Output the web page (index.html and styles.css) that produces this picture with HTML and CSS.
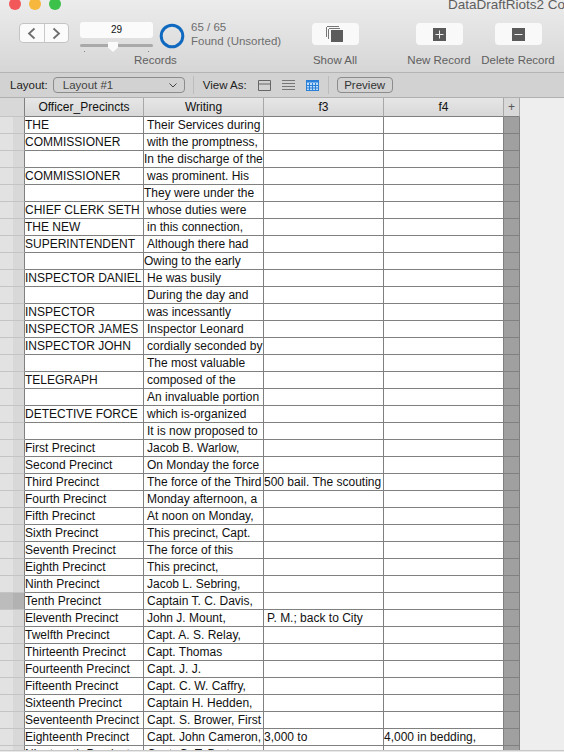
FILE: index.html
```html
<!DOCTYPE html>
<html lang="en">
<head>
<meta charset="utf-8">
<title>DataDraftRiots2 Copy</title>
<link rel="stylesheet" href="styles.css">
</head>
<body>
<header class="toolbar">
  <div class="titlebar">
    <span class="light red"></span><span class="light yellow"></span><span class="light green"></span>
    <span class="title">DataDraftRiots2 Copy</span>
  </div>
  <div class="tools">
    <div class="nav">
      <span class="nav-btn"><svg width="9" height="13" viewBox="0 0 9 13"><path d="M7.500 1.500 2 6.500l5.500 5" class="chev"/></svg></span>
      <span class="nav-btn"><svg width="9" height="13" viewBox="0 0 9 13"><path d="M1.500 1.500 7 6.500l-5.500 5" class="chev"/></svg></span>
    </div>
    <div class="records">
      <div class="records-top">
        <div class="stepper">
          <div class="rec-input">29</div>
          <div class="slider"><span class="thumb"></span></div>
          <div class="ticks"><span></span><span></span></div>
        </div>
        <svg class="ring" width="26" height="26" viewBox="0 0 26 26"><circle cx="13" cy="13" r="10.800" fill="none" stroke="#0f69c0" stroke-width="3"/></svg>
      </div>
      <div class="tool-label records-label">Records</div>
    </div>
    <div class="found"><div>65 / 65</div><div>Found (Unsorted)</div></div>
    <div class="tool tool-show">
      <span class="tool-btn"><svg width="18" height="16" viewBox="0 0 18 16"><path d="M1 .5h12M.5 1v10M3 2.500h11M2.500 3v10" fill="none" stroke="#777"/><rect x="5" y="4" width="12" height="12" fill="#5c5c5c"/></svg></span>
      <span class="tool-label">Show All</span>
    </div>
    <div class="tool tool-new">
      <span class="tool-btn"><svg width="13" height="13" viewBox="0 0 13 13"><rect width="13" height="13" fill="#5a5a5a"/><path d="M6.500 2.500v8M2.500 6.500h8" stroke="#eee" fill="none"/></svg></span>
      <span class="tool-label">New Record</span>
    </div>
    <div class="tool tool-del">
      <span class="tool-btn"><svg width="13" height="13" viewBox="0 0 13 13"><rect width="13" height="13" fill="#5a5a5a"/><path d="M2.500 6.500h8" stroke="#eee" fill="none"/></svg></span>
      <span class="tool-label">Delete Record</span>
    </div>
  </div>
</header>
<div class="layoutbar">
  <span class="bar-label">Layout:</span>
  <div class="select"><span>Layout #1</span><svg width="8" height="5" viewBox="0 0 8 5"><path d="M.500.500 4 4 7.500.500" fill="none" stroke="#444"/></svg></div>
  <span class="sep"></span>
  <span class="bar-label view-as">View As:</span>
  <svg class="view-icon" width="13" height="11" viewBox="0 0 13 11"><path d="M.500.500h12v10H.500zM.500 4h12" fill="none" stroke="#666"/></svg>
  <svg class="view-icon" width="13" height="10" viewBox="0 0 13 10"><path d="M0 .500h13M0 3.500h13M0 6.500h13M0 9.500h13" fill="none" stroke="#777"/></svg>
  <svg class="view-icon" width="13" height="11" viewBox="0 0 13 11"><rect x=".500" y=".500" width="12" height="10" fill="#bcdcf8" stroke="#2a7fd8"/><path d="M0 .500h13v2H0z" fill="#2a7fd8"/><path d="M3.500 3v7M6.500 3v7M9.500 3v7M1 5.500h11M1 8h11" stroke="#2a7fd8" fill="none"/></svg>
  <span class="sep sep-b"></span>
  <span class="preview">Preview</span>
</div>
<main class="sheet">
<table class="grid">
<thead>
<tr><th class="gut"></th><th>Officer_Precincts</th><th>Writing</th><th>f3</th><th>f4</th><th class="add">+</th></tr>
</thead>
<tbody>
<tr><td class="gut"></td><td>THE</td><td class="in">Their Services during</td><td></td><td></td><td class="end"></td></tr>
<tr><td class="gut"></td><td>COMMISSIONER</td><td class="in">with the promptness,</td><td></td><td></td><td class="end"></td></tr>
<tr><td class="gut"></td><td></td><td>In the discharge of the</td><td></td><td></td><td class="end"></td></tr>
<tr><td class="gut"></td><td>COMMISSIONER</td><td class="in">was prominent. His</td><td></td><td></td><td class="end"></td></tr>
<tr><td class="gut"></td><td></td><td>They were under the</td><td></td><td></td><td class="end"></td></tr>
<tr><td class="gut"></td><td>CHIEF CLERK SETH</td><td class="in">whose duties were</td><td></td><td></td><td class="end"></td></tr>
<tr><td class="gut"></td><td>THE NEW</td><td class="in">in this connection,</td><td></td><td></td><td class="end"></td></tr>
<tr><td class="gut"></td><td>SUPERINTENDENT</td><td class="in">Although there had</td><td></td><td></td><td class="end"></td></tr>
<tr><td class="gut"></td><td></td><td>Owing to the early</td><td></td><td></td><td class="end"></td></tr>
<tr><td class="gut"></td><td>INSPECTOR DANIEL</td><td class="in">He was busily</td><td></td><td></td><td class="end"></td></tr>
<tr><td class="gut"></td><td></td><td class="in">During the day and</td><td></td><td></td><td class="end"></td></tr>
<tr><td class="gut"></td><td>INSPECTOR</td><td class="in">was incessantly</td><td></td><td></td><td class="end"></td></tr>
<tr><td class="gut"></td><td>INSPECTOR JAMES</td><td class="in">Inspector Leonard</td><td></td><td></td><td class="end"></td></tr>
<tr><td class="gut"></td><td>INSPECTOR JOHN</td><td class="in">cordially seconded by</td><td></td><td></td><td class="end"></td></tr>
<tr><td class="gut"></td><td></td><td class="in">The most valuable</td><td></td><td></td><td class="end"></td></tr>
<tr><td class="gut"></td><td>TELEGRAPH</td><td class="in">composed of the</td><td></td><td></td><td class="end"></td></tr>
<tr><td class="gut"></td><td></td><td class="in">An invaluable portion</td><td></td><td></td><td class="end"></td></tr>
<tr><td class="gut"></td><td>DETECTIVE FORCE</td><td class="in">which is-organized</td><td></td><td></td><td class="end"></td></tr>
<tr><td class="gut"></td><td></td><td class="in">It is now proposed to</td><td></td><td></td><td class="end"></td></tr>
<tr><td class="gut"></td><td>First Precinct</td><td class="in">Jacob B. Warlow,</td><td></td><td></td><td class="end"></td></tr>
<tr><td class="gut"></td><td>Second Precinct</td><td class="in">On Monday the force</td><td></td><td></td><td class="end"></td></tr>
<tr><td class="gut"></td><td>Third Precinct</td><td class="in">The force of the Third</td><td>500 bail. The scouting</td><td></td><td class="end"></td></tr>
<tr><td class="gut"></td><td>Fourth Precinct</td><td class="in">Monday afternoon, a</td><td></td><td></td><td class="end"></td></tr>
<tr><td class="gut"></td><td>Fifth Precinct</td><td class="in">At noon on Monday,</td><td></td><td></td><td class="end"></td></tr>
<tr><td class="gut"></td><td>Sixth Precinct</td><td class="in">This precinct, Capt.</td><td></td><td></td><td class="end"></td></tr>
<tr><td class="gut"></td><td>Seventh Precinct</td><td class="in">The force of this</td><td></td><td></td><td class="end"></td></tr>
<tr><td class="gut"></td><td>Eighth Precinct</td><td class="in">This precinct,</td><td></td><td></td><td class="end"></td></tr>
<tr><td class="gut"></td><td>Ninth Precinct</td><td class="in">Jacob L. Sebring,</td><td></td><td></td><td class="end"></td></tr>
<tr><td class="gut current"></td><td>Tenth Precinct</td><td class="in">Captain T. C. Davis,</td><td></td><td></td><td class="end"></td></tr>
<tr><td class="gut"></td><td>Eleventh Precinct</td><td class="in">John J. Mount,</td><td class="in">P. M.; back to City</td><td></td><td class="end"></td></tr>
<tr><td class="gut"></td><td>Twelfth Precinct</td><td class="in">Capt. A. S. Relay,</td><td></td><td></td><td class="end"></td></tr>
<tr><td class="gut"></td><td>Thirteenth Precinct</td><td class="in">Capt. Thomas</td><td></td><td></td><td class="end"></td></tr>
<tr><td class="gut"></td><td>Fourteenth Precinct</td><td class="in">Capt. J. J.</td><td></td><td></td><td class="end"></td></tr>
<tr><td class="gut"></td><td>Fifteenth Precinct</td><td class="in">Capt. C. W. Caffry,</td><td></td><td></td><td class="end"></td></tr>
<tr><td class="gut"></td><td>Sixteenth Precinct</td><td class="in">Captain H. Hedden,</td><td></td><td></td><td class="end"></td></tr>
<tr><td class="gut"></td><td>Seventeenth Precinct</td><td class="in">Capt. S. Brower, First</td><td></td><td></td><td class="end"></td></tr>
<tr><td class="gut"></td><td>Eighteenth Precinct</td><td class="in">Capt. John Cameron,</td><td>3,000 to</td><td>4,000 in bedding,</td><td class="end"></td></tr>
<tr><td class="gut"></td><td>Nineteenth Precinct</td><td class="in">Capt. G. T. Burt,</td><td></td><td></td><td class="end"></td></tr>
</tbody>
</table>
</main>
<footer class="statusbar"></footer>
</body>
</html>
```
FILE: styles.css
```css
* { box-sizing: border-box; }
html, body { margin: 0; padding: 0; }
body {
  width: 564px;
  height: 752px;
  overflow: hidden;
  display: flex;
  flex-direction: column;
  background: #eeeeee;
  font-family: "Liberation Sans", Arial, sans-serif;
  color: #111;
}
.toolbar {
  height: 73px;
  flex: none;
  overflow: hidden;
  background: linear-gradient(#ececec, #d6d6d6);
  border-bottom: 1px solid #b4b4b4;
}
.titlebar {
  height: 22px;
  display: flex;
  padding-left: 9px;
  gap: 8px;
}
.light {
  width: 12px;
  height: 12px;
  border-radius: 50%;
  margin-top: -2px;
  flex: none;
}
.red { background: #f2575a; }
.yellow { background: #f6b73c; }
.green { background: #3cc24a; }
.title {
  margin-left: 379px;
  font-size: 13.500px;
  line-height: 12px;
  margin-top: -1px;
  color: #5e5e5e;
  white-space: nowrap;
}
.tools { display: flex; align-items: flex-start; }
.nav {
  margin: 1px 0 0 19px;
  width: 50px;
  height: 20px;
  display: flex;
  background: #fbfbfb;
  border: 1px solid #c4c4c4;
  border-radius: 4px;
}
.nav-btn {
  flex: 1;
  display: flex;
  align-items: center;
  justify-content: center;
}
.nav-btn + .nav-btn { border-left: 1px solid #c8c8c8; }
.chev { fill: none; stroke: #6e6e6e; stroke-width: 1.800; }
.records { margin-left: 11px; width: 105px; }
.records-top { display: flex; align-items: flex-start; }
.stepper { width: 73px; }
.rec-input {
  height: 16px;
  background: #fbfbfb;
  border-radius: 3px;
  font-size: 10px;
  line-height: 16px;
  text-align: center;
}
.slider {
  position: relative;
  margin-top: 6px;
  height: 3px;
  background: #a9a9a9;
  border-radius: 2px;
}
.thumb {
  position: absolute;
  left: 28px;
  top: -2px;
  width: 10px;
  height: 10px;
  background: #fafafa;
  clip-path: polygon(0 0, 100% 0, 100% 55%, 50% 100%, 0 55%);
}
.ticks {
  display: flex;
  justify-content: space-between;
  padding: 0 4px;
  margin-top: 4px;
  height: 1px;
}
.ticks span { width: 1px; height: 1px; background: #888; }
.ring { margin: 1px 0 0 6px; flex: none; }
.tool-label { font-size: 11.500px; line-height: 14px; color: #606060; white-space: nowrap; }
.records-label { margin: 1px 0 0 54px; width: 44px; }
.found {
  margin: -2px 0 0 6px;
  width: 112px;
  font-size: 11.500px;
  line-height: 14px;
  color: #6e6e6e;
  white-space: nowrap;
}
.tool {
  display: flex;
  flex-direction: column;
  align-items: center;
  margin-top: 1px;
  gap: 8px;
}
.tool-show { width: 64px; }
.tool-new { width: 80px; margin-left: 32px; }
.tool-del { width: 78px; }
.tool-btn {
  width: 47px;
  height: 22px;
  background: #f9f9f9;
  border-radius: 4px;
  display: flex;
  align-items: center;
  justify-content: center;
}
.layoutbar {
  height: 25px;
  flex: none;
  display: flex;
  align-items: center;
  padding-left: 10px;
  background: #d2d2d2;
  border-bottom: 1px solid #b0b0b0;
  font-size: 11.500px;
  color: #222;
}
.select {
  margin-left: 5px;
  width: 132px;
  height: 16px;
  padding: 0 7px 0 9px;
  border: 1px solid #8c8c8c;
  border-radius: 4px;
  display: flex;
  align-items: center;
  justify-content: space-between;
  color: #444;
}
.sep { width: 1px; height: 18px; background: #bcbcbc; margin-left: 8px; }
.view-as { margin-left: 9px; margin-right: 11px; }
.view-icon { margin-right: 11px; flex: none; }
.view-icon:last-of-type { margin-right: 0; }
.sep-b { margin-left: 9px; }
.preview {
  margin-left: 8px;
  width: 56px;
  height: 16px;
  border: 1px solid #8c8c8c;
  border-radius: 4px;
  text-align: center;
  line-height: 14px;
  color: #333;
}
.sheet { flex: 1; min-height: 0; overflow: hidden; }
.grid {
  table-layout: fixed;
  width: 520px;
  border-collapse: separate;
  border-spacing: 0;
  font-size: 12px;
}
.grid th, .grid td {
  padding: 0;
  border-right: 1px solid #808080;
  border-bottom: 1px solid #808080;
  overflow: hidden;
  white-space: nowrap;
  line-height: 16px;
  height: 17px;
  background: #fff;
}
.grid th {
  font-weight: normal;
  text-align: center;
  height: 19px;
  background: linear-gradient(#e6e6e6, #d8d8d8);
  border-right-color: #a8a8a8;
}
.grid th:nth-child(1), .grid td:nth-child(1) { width: 25px; }
.grid th:nth-child(2) { width: 119px; }
.grid th:nth-child(3), .grid th:nth-child(4), .grid th:nth-child(5) { width: 120px; }
.grid th:nth-child(6) { width: 16px; }
.grid .in { padding-left: 3px; }
.grid .gut {
  background: linear-gradient(90deg, #e2e2e2 13px, #d8d8d8 13px);
  border-bottom-color: #c4c4c4;
  border-right-color: #808080;
}
.grid th.gut { background: #d8d8d8; }
.grid .current { background: linear-gradient(90deg, #bcbcbc 13px, #b2b2b2 13px); }
.grid .end { background: #a0a0a0; }
.grid .add { color: #555; background: #d8d8d8; }
.statusbar { height: 2px; flex: none; background: #e8e8e8; border-top: 1px solid #c8c8c8; }
```
